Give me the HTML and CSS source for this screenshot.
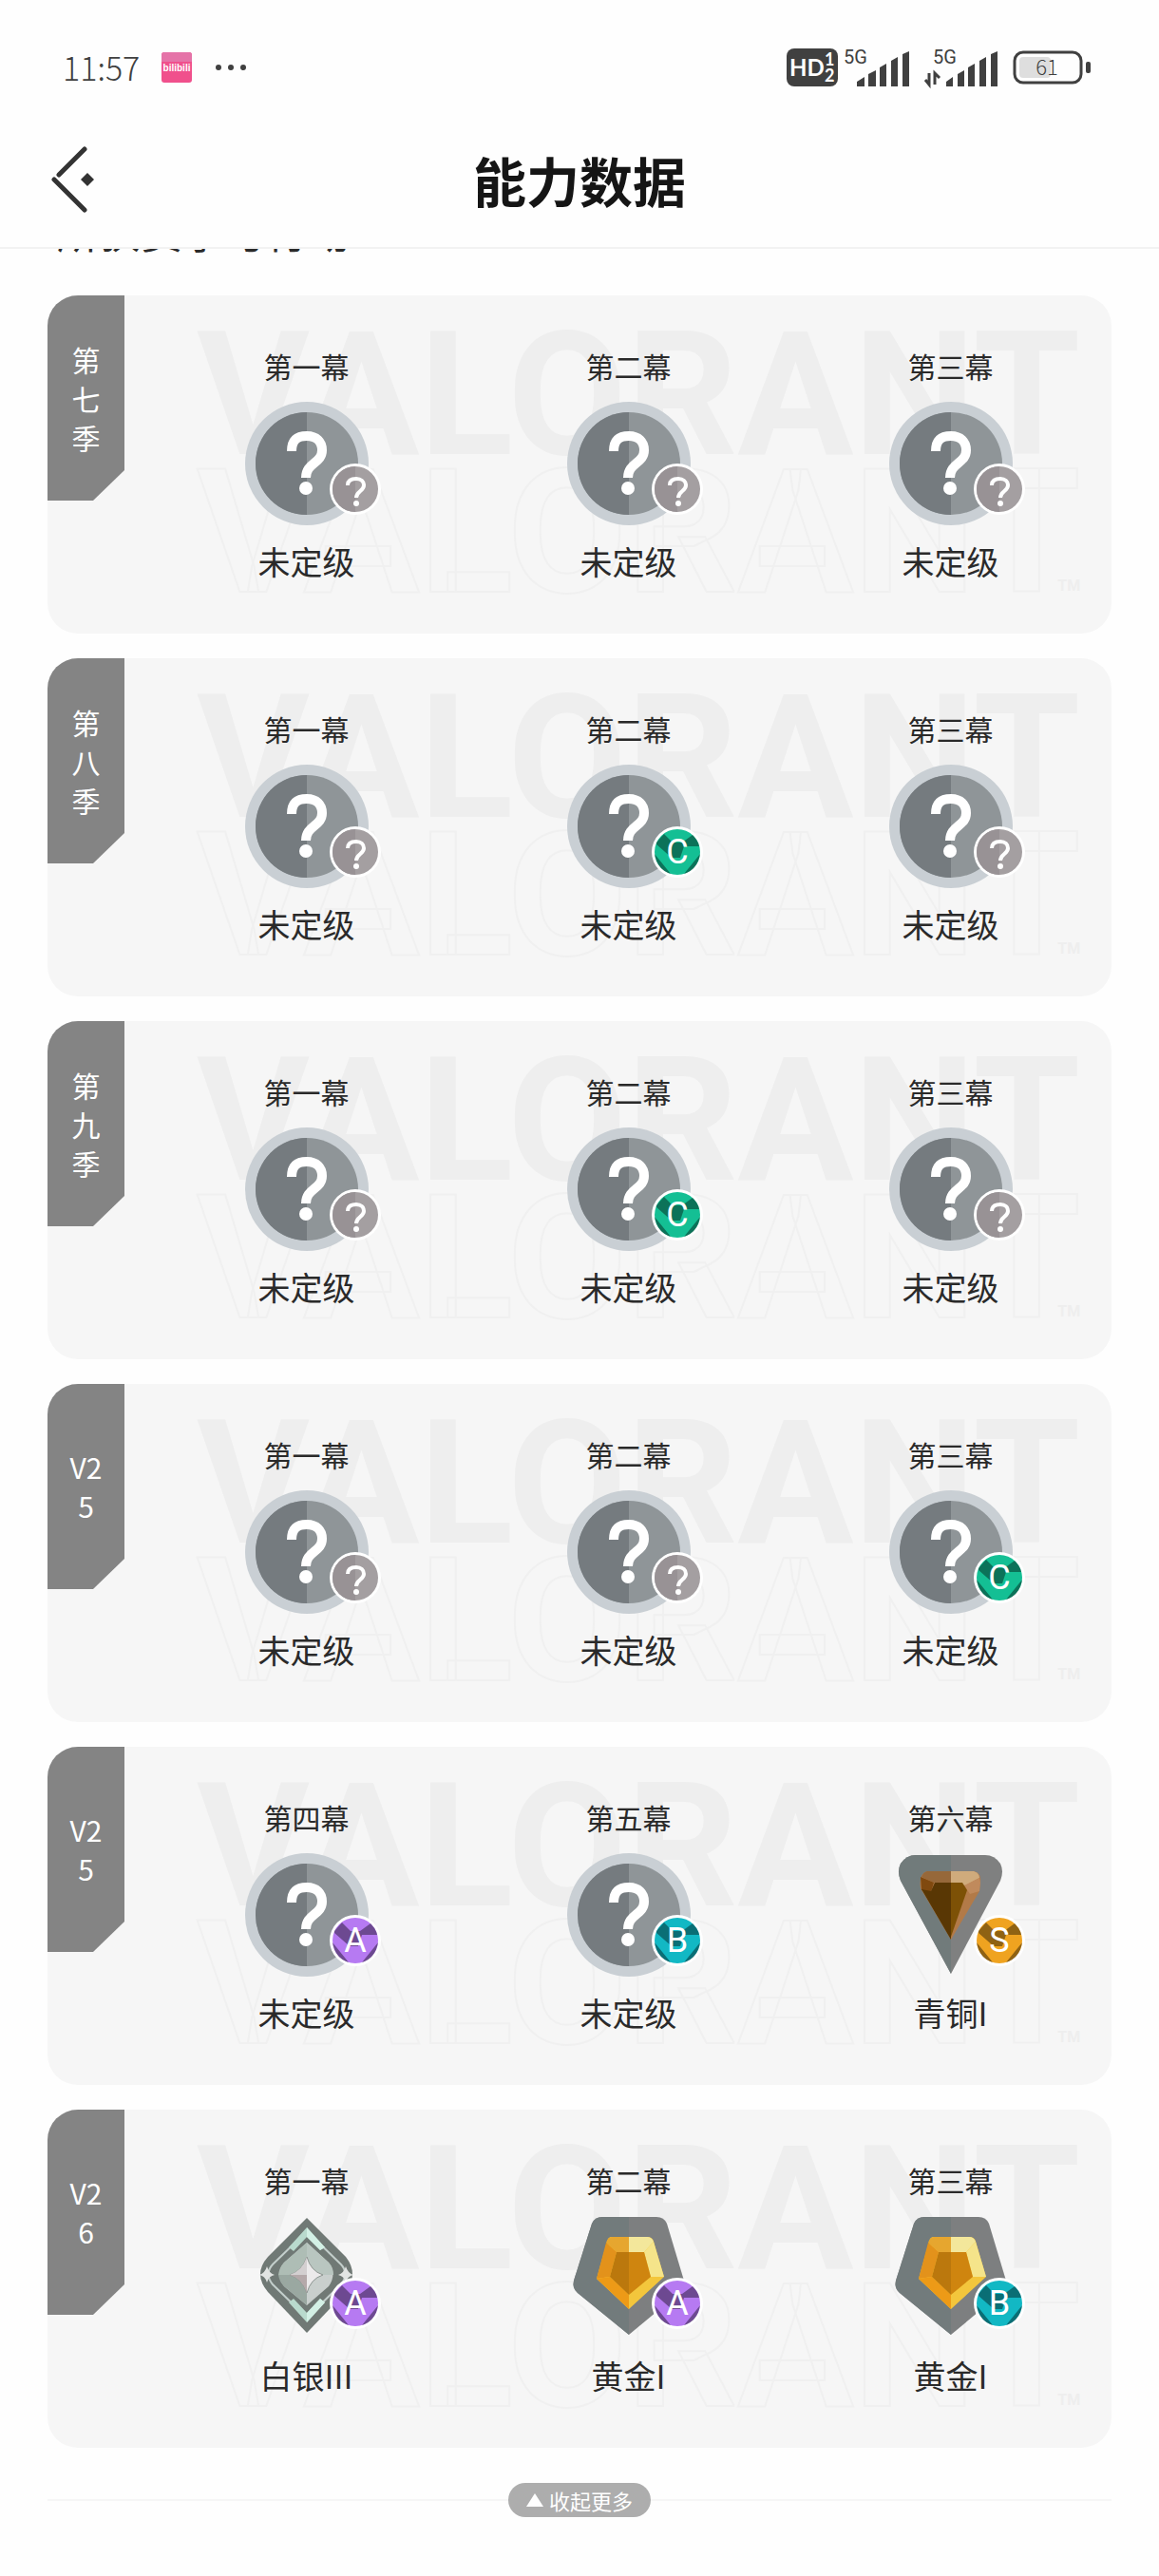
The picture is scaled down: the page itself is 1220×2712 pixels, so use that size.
FILE: index.html
```
<!DOCTYPE html>
<html lang="zh-CN">

<head>
    <meta charset="UTF-8">
    <meta name="viewport" content="width=device-width, initial-scale=1.0">
    <title>能力数据</title>
    <link rel="stylesheet" href="styles.css">
</head>

<body>
    <!-- 公用图形 -->
    <svg class="defs" aria-hidden="true">
        <!-- 未定级 -->
        <symbol id="rank-none" viewBox="0 0 130 130">
            <circle cx="65" cy="65" r="65" fill="#c9cfd4" />
            <circle cx="65" cy="65" r="54" fill="#8f9598" />
            <path d="M65 11a54 54 0 0 0 0 108z" fill="#757b7f" />
            <path d="M49 52C49 40 55 36 65 36C75 36 81 42 81 51C81 65 64 64 64 80" fill="none" stroke="#fff" stroke-width="10" />
            <circle cx="64" cy="91" r="7" fill="#fff" />
        </symbol>
        <!-- 青铜 -->
        <symbol id="rank-bronze" viewBox="0 0 130 130">
            <path d="M28 2H101Q111 2 117 11Q121 19 117 29L65 127L12 29Q8 19 12 11Q18 2 28 2z" fill="#7f8080" />
            <path d="M28 2H65V127L12 29Q8 19 12 11Q18 2 28 2z" fill="#717b7b" />
            <path d="M40 19H89Q97 21 96 29L95 40L65 91L33 37Q31 21 40 19z" fill="#b27a48" />
            <path d="M65 19H89Q95 21 95 26L80 34L65 31z" fill="#cfab7c" />
            <path d="M95 26L96 31L95 40L85 43L79 34z" fill="#c08a5c" />
            <path d="M40 19H65V31H47L34 25Q36 20 40 19z" fill="#96683a" />
            <path d="M33 25L47 31L44 41L34 39z" fill="#80490f" />
            <path d="M48 31H65V91L34 38L44 40z" fill="#593704" />
            <path d="M65 31H77L82 39L65 88z" fill="#7d5106" />
        </symbol>
        <!-- 白银 -->
        <symbol id="rank-silver" viewBox="0 0 130 130">
            <path d="M65 2L106 43Q120 61 106 80L65 123L24 80Q8 61 24 43z" fill="#707975" />
            <path d="M65 16L29 51Q20 61 29 72L65 107L101 72Q110 61 101 51z" fill="none" stroke="#c3cecb" stroke-width="2" />
            <path d="M46 33L65 12L84 33L79 36L65 22L51 37z" fill="#b9dacd" />
            <path d="M46 91L65 112L84 91L79 87L65 102L51 87z" fill="#b9dacd" />
            <path d="M65 12L84 33L79 36L65 22z" fill="#d3f0e5" />
            <path d="M65 112L84 91L79 87L65 102z" fill="#d3f0e5" />
            <path d="M65 28L88 49Q97 61 88 74L65 94L41 74Q31 61 41 49z" fill="#c9cfcd" />
            <path d="M65 28V62H35Q36 54 41 49z" fill="#aebdb5" />
            <path d="M65 62V94L41 74Q36 69 35 62z" fill="#9aa8a1" />
            <path d="M65 28L88 49Q93 54 93 62H65z" fill="#b9c6c0" />
            <path d="M65 43Q69 58 82 62Q69 66 65 81Q60 66 47 62Q60 58 65 43z" fill="#eceaeb" stroke="#8d9591" stroke-width="1" />
            <path d="M65 62V81Q60 66 47 62z" fill="#b5a9aa" />
            <path d="M65 62V43Q60 58 47 62z" fill="#d3cfd0" />
            <path d="M23 53Q25 60 31 62Q25 63 23 70Q21 63 15 62Q21 60 23 53zM106 53Q108 60 114 62Q108 63 106 70Q104 63 98 62Q104 60 106 53z" fill="#e2e4e3" />
        </symbol>
        <!-- 黄金 -->
        <symbol id="rank-gold" viewBox="0 0 130 130">
            <path d="M37 1H94Q102 1 105 8L123 68Q124 76 118 81L65 125L11 81Q5 76 7 68L26 8Q29 1 37 1z" fill="#7d7f80" />
            <path d="M37 1H65V125L11 81Q5 76 7 68L26 8Q29 1 37 1z" fill="#727b7c" />
            <path d="M47 22H84Q90 22 91 27L102 64L65 98L31 66L42 27Q43 22 47 22z" fill="#f3c63c" />
            <path d="M47 22H65V38H52L41 28Q43 22 47 22z" fill="#e6a62f" />
            <path d="M41 28L52 38L45 64L31 66z" fill="#e3921b" />
            <path d="M31 66L45 64L65 83V98z" fill="#ed9a17" />
            <path d="M65 22H84Q89 22 91 27L81 38H65z" fill="#f3e79b" />
            <path d="M91 27L102 64L88 64L81 38z" fill="#f5e48a" />
            <path d="M52 38H65V83L45 64z" fill="#bb780d" />
            <path d="M65 38H81L88 64L65 83z" fill="#cf850f" />
        </symbol>
        <!-- 角标底 -->
        <symbol id="badge-bg" viewBox="0 0 54 54">
            <circle cx="27" cy="27" r="27" fill="#fff" />
            <circle cx="27" cy="27" r="24" fill="currentColor" />
            <path d="M5 17L13 8L22 17H32L43 9Q49 15 50 21L34 21L30 33H21L5 19z" fill="#000" opacity=".4" />
            <path d="M3 29L20 50Q6 46 3 29zM51 29L34 50Q48 46 51 29z" fill="#000" opacity=".4" />
        </symbol>
        <symbol id="badge-none" viewBox="0 0 54 54">
            <circle cx="27" cy="27" r="27" fill="#fff" />
            <circle cx="27" cy="27" r="24" fill="#a49fa1" />
            <path d="M27 3a24 24 0 0 0 0 48z" fill="#989295" />
            <path d="M19 23C19 18 22 16 28 16C33 16 36 19 36 23C36 29 28 29 28 36" fill="none" stroke="#fff" stroke-width="4" />
            <circle cx="28" cy="42" r="3" fill="#fff" />
        </symbol>
    </svg>

    <!-- 状态栏 -->
    <div class="status">
        <span class="clock">11:57</span>
        <svg class="app" viewBox="0 0 32 32">
            <rect width="32" height="32" rx="3" fill="#f0508c" />
            <path d="M0 10V3Q0 0 3 0H29Q32 0 32 3V10z" fill="#e573a8" />
            <text x="16" y="20" text-anchor="middle">bilibili</text>
        </svg>
        <svg class="dots" viewBox="0 0 34 8">
            <circle cx="4" cy="4" r="3" />
            <circle cx="17" cy="4" r="3" />
            <circle cx="30" cy="4" r="3" />
        </svg>
        <svg class="hd" viewBox="0 0 54 40">
            <rect width="54" height="40" rx="8" fill="#404040" />
            <text class="big" x="3" y="29">HD</text>
            <text x="40" y="18">1</text>
            <text x="40" y="35">2</text>
        </svg>
        <svg class="signal first" viewBox="0 0 76 40">
            <text x="6" y="16">5G</text>
            <path d="M20 40V35L28 30V40zM32 40V27L40 23V40zM44 40V20L51 16V40zM56 40V13L63 9V40zM68 40V6L75 3V40z" />
        </svg>
        <svg class="signal" viewBox="0 0 76 40">
            <text x="8" y="16">5G</text>
            <path d="M22 40V35L29 30V40zM34 40V27L41 23V40zM45 40V20L52 16V40zM57 40V13L64 9V40zM69 40V6L76 3V40z" />
            <path d="M4 26V38L0 33M10 38V26L15 31" fill="none" stroke="#404040" stroke-width="3" />
        </svg>
        <svg class="battery" viewBox="0 0 82 36">
            <rect x="7" y="7" width="33" height="22" rx="4" fill="#dedede" />
            <rect x="2" y="2" width="70" height="32" rx="9" fill="none" stroke="#404040" stroke-width="3" />
            <rect x="77" y="12" width="5" height="12" rx="2" />
            <text x="36" y="26" text-anchor="middle">61</text>
        </svg>
    </div>

    <!-- 标题栏 -->
    <header class="header">
        <button class="back" type="button" aria-label="返回">
            <svg viewBox="0 0 46 70">
                <path d="M35 3L8 30M3 35L35 67" fill="none" stroke="#333" stroke-width="5" stroke-linecap="round" />
                <path d="M38 28L45 35L38 42L31 35z" fill="#333" />
            </svg>
        </button>
        <h1>能力数据</h1>
    </header>

    <main class="content">
        <h2 class="clipped">所获赛季与行动</h2>

        <section class="season">
            <h3 class="tab"><span>第七季</span></h3>
            <div class="acts">
                <div class="mark" aria-hidden="true"><b>VALORANT</b><i>VALORANT</i><small>TM</small></div>
                <div class="act">
                    <p class="name">第一幕</p>
                    <div class="rank"><svg><use href="#rank-none" /></svg><svg class="badge"><use href="#badge-none" /></svg></div>
                    <p class="level">未定级</p>
                </div>
                <div class="act">
                    <p class="name">第二幕</p>
                    <div class="rank"><svg><use href="#rank-none" /></svg><svg class="badge"><use href="#badge-none" /></svg></div>
                    <p class="level">未定级</p>
                </div>
                <div class="act">
                    <p class="name">第三幕</p>
                    <div class="rank"><svg><use href="#rank-none" /></svg><svg class="badge"><use href="#badge-none" /></svg></div>
                    <p class="level">未定级</p>
                </div>
            </div>
        </section>

        <section class="season">
            <h3 class="tab"><span>第八季</span></h3>
            <div class="acts">
                <div class="mark" aria-hidden="true"><b>VALORANT</b><i>VALORANT</i><small>TM</small></div>
                <div class="act">
                    <p class="name">第一幕</p>
                    <div class="rank"><svg><use href="#rank-none" /></svg><svg class="badge"><use href="#badge-none" /></svg></div>
                    <p class="level">未定级</p>
                </div>
                <div class="act">
                    <p class="name">第二幕</p>
                    <div class="rank"><svg><use href="#rank-none" /></svg><svg class="badge green"><use href="#badge-bg" /><text x="27" y="39">C</text></svg></div>
                    <p class="level">未定级</p>
                </div>
                <div class="act">
                    <p class="name">第三幕</p>
                    <div class="rank"><svg><use href="#rank-none" /></svg><svg class="badge"><use href="#badge-none" /></svg></div>
                    <p class="level">未定级</p>
                </div>
            </div>
        </section>

        <section class="season">
            <h3 class="tab"><span>第九季</span></h3>
            <div class="acts">
                <div class="mark" aria-hidden="true"><b>VALORANT</b><i>VALORANT</i><small>TM</small></div>
                <div class="act">
                    <p class="name">第一幕</p>
                    <div class="rank"><svg><use href="#rank-none" /></svg><svg class="badge"><use href="#badge-none" /></svg></div>
                    <p class="level">未定级</p>
                </div>
                <div class="act">
                    <p class="name">第二幕</p>
                    <div class="rank"><svg><use href="#rank-none" /></svg><svg class="badge green"><use href="#badge-bg" /><text x="27" y="39">C</text></svg></div>
                    <p class="level">未定级</p>
                </div>
                <div class="act">
                    <p class="name">第三幕</p>
                    <div class="rank"><svg><use href="#rank-none" /></svg><svg class="badge"><use href="#badge-none" /></svg></div>
                    <p class="level">未定级</p>
                </div>
            </div>
        </section>

        <section class="season">
            <h3 class="tab"><span>V25</span></h3>
            <div class="acts">
                <div class="mark" aria-hidden="true"><b>VALORANT</b><i>VALORANT</i><small>TM</small></div>
                <div class="act">
                    <p class="name">第一幕</p>
                    <div class="rank"><svg><use href="#rank-none" /></svg><svg class="badge"><use href="#badge-none" /></svg></div>
                    <p class="level">未定级</p>
                </div>
                <div class="act">
                    <p class="name">第二幕</p>
                    <div class="rank"><svg><use href="#rank-none" /></svg><svg class="badge"><use href="#badge-none" /></svg></div>
                    <p class="level">未定级</p>
                </div>
                <div class="act">
                    <p class="name">第三幕</p>
                    <div class="rank"><svg><use href="#rank-none" /></svg><svg class="badge green"><use href="#badge-bg" /><text x="27" y="39">C</text></svg></div>
                    <p class="level">未定级</p>
                </div>
            </div>
        </section>

        <section class="season">
            <h3 class="tab"><span>V25</span></h3>
            <div class="acts">
                <div class="mark" aria-hidden="true"><b>VALORANT</b><i>VALORANT</i><small>TM</small></div>
                <div class="act">
                    <p class="name">第四幕</p>
                    <div class="rank"><svg><use href="#rank-none" /></svg><svg class="badge purple"><use href="#badge-bg" /><text x="27" y="39">A</text></svg></div>
                    <p class="level">未定级</p>
                </div>
                <div class="act">
                    <p class="name">第五幕</p>
                    <div class="rank"><svg><use href="#rank-none" /></svg><svg class="badge cyan"><use href="#badge-bg" /><text x="27" y="39">B</text></svg></div>
                    <p class="level">未定级</p>
                </div>
                <div class="act">
                    <p class="name">第六幕</p>
                    <div class="rank"><svg><use href="#rank-bronze" /></svg><svg class="badge amber"><use href="#badge-bg" /><text x="27" y="39">S</text></svg></div>
                    <p class="level">青铜I</p>
                </div>
            </div>
        </section>

        <section class="season">
            <h3 class="tab"><span>V26</span></h3>
            <div class="acts">
                <div class="mark" aria-hidden="true"><b>VALORANT</b><i>VALORANT</i><small>TM</small></div>
                <div class="act">
                    <p class="name">第一幕</p>
                    <div class="rank"><svg><use href="#rank-silver" /></svg><svg class="badge purple"><use href="#badge-bg" /><text x="27" y="39">A</text></svg></div>
                    <p class="level">白银III</p>
                </div>
                <div class="act">
                    <p class="name">第二幕</p>
                    <div class="rank"><svg><use href="#rank-gold" /></svg><svg class="badge purple"><use href="#badge-bg" /><text x="27" y="39">A</text></svg></div>
                    <p class="level">黄金I</p>
                </div>
                <div class="act">
                    <p class="name">第三幕</p>
                    <div class="rank"><svg><use href="#rank-gold" /></svg><svg class="badge cyan"><use href="#badge-bg" /><text x="27" y="39">B</text></svg></div>
                    <p class="level">黄金I</p>
                </div>
            </div>
        </section>

        <!-- 收起 -->
        <div class="more">
            <button type="button">
                <svg viewBox="0 0 18 14"><path d="M9 0L18 14H0z" fill="#fff" /></svg>
                收起更多
            </button>
        </div>
    </main>
</body>

</html>
```

FILE: styles.css
```
* {
    box-sizing: border-box;
}

body {
    margin: 0;
    background-color: #fefefe;
    color: #2a2a2a;
    font-family: "Noto Sans CJK SC", sans-serif;
}

h1, h2, h3, p {
    margin: 0;
    font-weight: normal;
}

svg {
    display: block;
    flex: none;
}

button {
    border: none;
    padding: 0;
    background: none;
    font-family: inherit;
    cursor: pointer;
}

.defs {
    position: absolute;
    width: 0;
    height: 0;
}

/* 状态栏 */
.status {
    display: flex;
    align-items: center;
    height: 118px;
    padding: 24px 72px 0 66px;
    color: #404040;
    fill: #404040;
}

.status svg {
    overflow: visible;
}

.clock {
    width: 104px;
    font-size: 34px;
    line-height: 40px;
    font-weight: 300;
}

.app {
    width: 32px;
    height: 32px;
}

.app text {
    fill: #fff;
    font-family: "Liberation Sans", sans-serif;
    font-size: 10px;
    font-weight: bold;
}

.dots {
    width: 34px;
    height: 8px;
    margin-left: 24px;
}

.hd {
    width: 54px;
    height: 40px;
    margin-left: auto;
}

.hd text {
    fill: #fff;
    font-family: Lato, sans-serif;
    font-size: 18px;
    font-weight: bold;
}

.hd .big {
    font-size: 24px;
}

.signal {
    width: 76px;
    height: 40px;
    margin-left: 16px;
}

.signal.first {
    margin-left: 0;
}

.signal text {
    font-family: Roboto, sans-serif;
    font-size: 20px;
}

.battery {
    width: 82px;
    height: 36px;
    margin-left: 16px;
}

.battery text {
    font-size: 22px;
    font-weight: 300;
}

/* 标题栏 */
.header {
    display: grid;
    grid-template-columns: 1fr auto 1fr;
    align-items: center;
    height: 144px;
    padding: 0 54px;
    border-bottom: 2px solid #f2f2f2;
}

.back {
    justify-self: start;
}

.back svg {
    width: 46px;
    height: 70px;
}

.header h1 {
    font-size: 56px;
    line-height: 80px;
    font-weight: bold;
    color: #151515;
}

/* 内容 */
.content {
    display: flex;
    flex-direction: column;
    gap: 26px;
    padding: 0 50px 62px;
}

/* 滚动到标题栏下面的小标题 */
.clipped {
    display: flex;
    align-items: flex-end;
    height: 6px;
    margin-bottom: 17px;
    padding-left: 10px;
    overflow: hidden;
    font-size: 44px;
    line-height: 50px;
}

.season {
    display: flex;
    align-items: flex-start;
    min-height: 356px;
    border-radius: 32px;
    overflow: hidden;
    background-color: #f6f6f6;
}

.tab {
    display: flex;
    flex: none;
    align-items: center;
    justify-content: center;
    width: 81px;
    height: 216px;
    background-color: #848484;
    clip-path: polygon(0 0, 100% 0, 100% 184px, 48px 100%, 0 100%);
}

.tab span {
    width: 40px;
    color: #fff;
    font-size: 30px;
    line-height: 41px;
    text-align: center;
    word-break: break-all;
}

.acts {
    position: relative;
    display: grid;
    grid-template-columns: repeat(3, 1fr);
    flex: 1;
    padding: 52px 0 0 22px;
}

.act {
    position: relative;
    display: flex;
    flex-direction: column;
    align-items: center;
}

.name {
    font-size: 30px;
    line-height: 44px;
}

.rank {
    position: relative;
    width: 130px;
    height: 130px;
    margin-top: 16px;
}

.rank svg {
    width: 130px;
    height: 130px;
}

.rank .badge {
    position: absolute;
    left: 89px;
    top: 65px;
    width: 54px;
    height: 54px;
}

.badge text {
    fill: #fff;
    font-family: Roboto, sans-serif;
    font-size: 36px;
    text-anchor: middle;
}

.green {
    color: #14bf94;
}

.purple {
    color: #b67af2;
}

.cyan {
    color: #12b8c4;
}

.amber {
    color: #efa320;
}

.level {
    margin-top: 13px;
    font-size: 34px;
    line-height: 50px;
}

/* 背景水印 */
.mark {
    position: absolute;
    top: 32px;
    left: 76px;
    display: flex;
    flex-direction: column;
    color: #eeeeee;
    font-family: Roboto, sans-serif;
    font-size: 182px;
    line-height: 145px;
}

.mark i {
    color: transparent;
    font-style: normal;
    font-weight: bold;
    -webkit-text-stroke: 2px #f0f0f0;
}

.mark small {
    position: absolute;
    right: 0;
    bottom: 6px;
    font-size: 16px;
    line-height: 20px;
    font-weight: bold;
}

/* 收起按钮 */
.more {
    display: flex;
    align-items: center;
    margin-top: 11px;
}

.more::before,
.more::after {
    content: "";
    flex: 1;
    height: 2px;
    background-color: #f6f6f6;
}

.more button {
    display: flex;
    align-items: center;
    justify-content: center;
    gap: 6px;
    width: 150px;
    height: 36px;
    border-radius: 18px;
    background-color: #adadad;
    color: #fff;
    font-size: 22px;
    line-height: 32px;
}

.more svg {
    width: 18px;
    height: 14px;
}
```
